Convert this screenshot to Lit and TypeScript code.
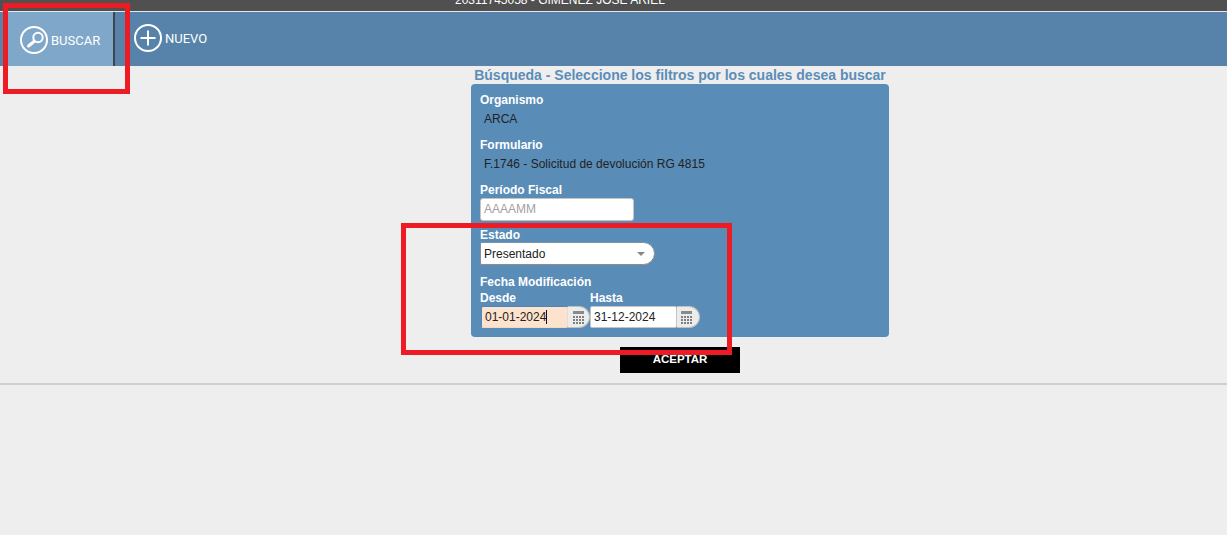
import { LitElement, html, css, svg } from "lit";
import { customElement } from "lit/decorators.js";

const calCells: [number, number][] = [];
for (let r = 0; r < 3; r++) for (let c = 0; c < 4; c++) calCells.push([c * 3, 6 + r * 3]);
const calIcon = html`<svg class="cal" width="12" height="15" viewBox="0 0 12 15">
  <rect x="0" y="1" width="11" height="3" fill="#8a8a8a"></rect>
  ${calCells.map(([x, y]) => svg`<rect x=${x} y=${y} width="2" height="2" fill="#808080"></rect>`)}
</svg>`;

@customElement("app-root")
export class AppRoot extends LitElement {
  static styles = css`
    :host { display: block; width: 1227px; height: 535px; background: #eeeeee; position: relative; overflow: hidden;
      font-family: "Liberation Sans", Arial, sans-serif; }
    .top { height: 11px; background: #505050; border-bottom: 1px solid #e6e6e6; display: flex; padding-left: 455px; overflow: hidden; }
    .user { color: #fff; font-size: 12px; line-height: 13px; margin-top: -6px; white-space: pre; }
    .nav { height: 54px; background: #5783aa; display: flex; font-family: Roboto, sans-serif; }
    .tab { display: flex; align-items: center; color: #fff; font-size: 13px; }
    .buscar { margin-left: 8px; background: #7fa7c9; border-right: 2px solid #3d4650; padding-left: 12px; box-sizing: border-box; gap: 3px; width: 107px; padding-top: 2px; }
    .nuevo { margin-left: 19px; gap: 3px; margin-top: -2px; }
    .main { display: flex; flex-direction: column; align-items: center; padding-left: 133px; }
    h1 { margin: 1px 0 1px; font-size: 14px; line-height: 16px; font-weight: bold; color: #5b8db9; white-space: nowrap; }
    .panel { box-sizing: border-box; width: 418px; height: 253px; background: #5a8cb8; border-radius: 4px; padding: 9px 9px 0; }
    label { display: block; color: #fff; font-size: 12px; font-weight: bold; line-height: 14px; }
    .val { font-size: 12px; line-height: 14px; color: #222; padding-left: 4px; margin-top: 5px; height: 26px; }
    .input { box-sizing: border-box; background: #fff; border: 1px solid #c4c4c4; border-radius: 2px; font-size: 12px; color: #222; padding-left: 3px; display: flex; align-items: center; }
    .periodo { width: 154px; height: 23px; color: #a0a0a0; margin-top: 1px; margin-bottom: 7px; border-radius: 3px; padding-bottom: 1px; }
    .select { width: 175px; height: 23px; border-radius: 2px 12px 12px 2px; border: 1px solid #7b93a8; box-shadow: 0 1px 0 #6f87a0; justify-content: space-between; padding-right: 9px; margin-bottom: 10px; }
    .arrow { width: 0; height: 0; border: 4px solid transparent; border-top: 4px solid #888; border-bottom: 0; }
    .fechas { display: flex; margin-top: 2px; }
    .col { display: flex; flex-direction: column; width: 110px; }
    .pair { display: flex; margin-top: 1px; }
    .date { width: 87px; height: 22px; color: #222; }
    .focus { margin-left: 1px; background: #fde3cd; border: 1px solid #e8dccf; border-top-color: #4f86bd; border-left-color: #4f86bd; }
    .caret { display: inline-block; width: 1px; height: 14px; background: #111; }
    .cb { box-sizing: border-box; width: 23px; height: 22px; background: #ececec; border: 1px solid #c0c0c0; border-left: 0; border-radius: 0 11px 11px 0; display: flex; align-items: center; padding-left: 4px; }
    .first { width: 22px; padding-left: 5px; }
    .aceptar { box-sizing: border-box; margin-top: 10px; width: 120px; height: 26px; padding-bottom: 2px; background: #000; color: #fff; font-size: 11.5px; font-weight: bold; display: flex; align-items: center; justify-content: center; }
    hr { margin: 10px 0 0; border: 0; height: 2px; background: #cfcfcf; }
    .mark { position: absolute; box-sizing: border-box; border: 5px solid #ed1c24; pointer-events: none; }
    .m1 { left: 3px; top: 3px; width: 127px; height: 91px; }
    .m2 { left: 401px; top: 223px; width: 331px; height: 132px; }
  `;

  render() {
    return html`
      <div class="top"><span class="user">20311745058 - GIMENEZ JOSE ARIEL</span></div>
      <div class="nav">
        <div class="tab buscar">
          <svg width="28" height="28" viewBox="0 0 28 28" fill="none" stroke="#fff">
            <circle cx="14" cy="14" r="13" stroke-width="2"></circle>
            <circle cx="18" cy="11.5" r="4.7" stroke-width="2"></circle>
            <path d="M14 15.5 L8.5 20" stroke-width="3" stroke-linecap="round"></path>
          </svg>
          <span>BUSCAR</span>
        </div>
        <div class="tab nuevo">
          <svg width="28" height="28" viewBox="0 0 28 28" fill="none" stroke="#fff">
            <circle cx="14" cy="14" r="13" stroke-width="2"></circle>
            <path d="M14 6.5 V21.5 M6.5 14 H21.5" stroke-width="2"></path>
          </svg>
          <span>NUEVO</span>
        </div>
      </div>
      <div class="main">
        <h1>Búsqueda - Seleccione los filtros por los cuales desea buscar</h1>
        <div class="panel">
          <label>Organismo</label>
          <div class="val">ARCA</div>
          <label>Formulario</label>
          <div class="val">F.1746 - Solicitud de devolución RG 4815</div>
          <label>Período Fiscal</label>
          <div class="input periodo">AAAAMM</div>
          <label>Estado</label>
          <div class="input select"><span>Presentado</span><span class="arrow"></span></div>
          <label>Fecha Modificación</label>
          <div class="fechas">
            <div class="col">
              <label>Desde</label>
              <div class="pair">
                <div class="input date focus">01-01-2024<span class="caret"></span></div>
                <div class="cb first">${calIcon}</div>
              </div>
            </div>
            <div class="col">
              <label>Hasta</label>
              <div class="pair">
                <div class="input date">31-12-2024</div>
                <div class="cb">${calIcon}</div>
              </div>
            </div>
          </div>
        </div>
        <div class="aceptar">ACEPTAR</div>
      </div>
      <hr />
      <div class="mark m1"></div>
      <div class="mark m2"></div>
    `;
  }
}
